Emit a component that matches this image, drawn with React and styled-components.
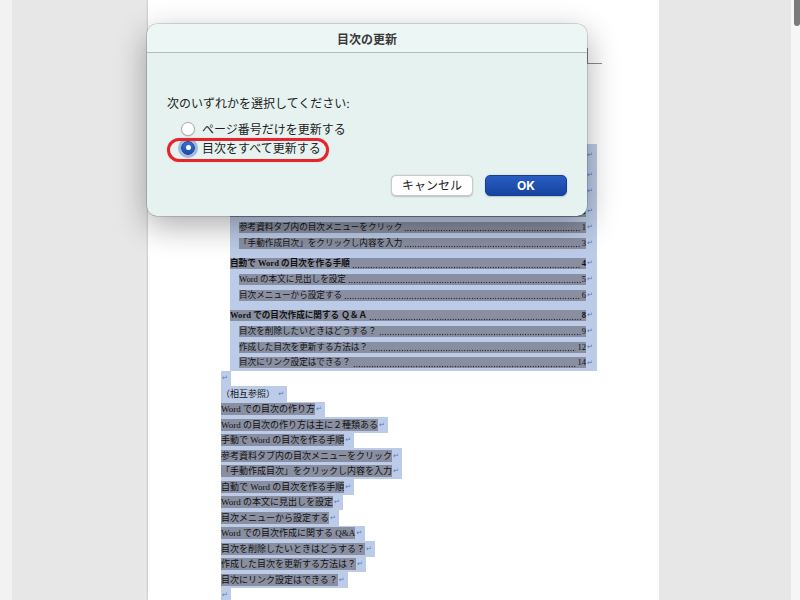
import React from 'react';
import styled, { createGlobalStyle } from 'styled-components';

const Global = createGlobalStyle`
  html, body { margin: 0; padding: 0; }
  body { width: 800px; height: 600px; overflow: hidden; background: #e7e7e7; }
`;

const LIGHT = '#bccbe7';
const DARK = '#898fa1';

const Screen = styled.div`
  position: relative;
  width: 800px;
  height: 600px;
  display: flex;
  overflow: hidden;
  background: #e7e7e7;
`;

const SideStrip = styled.div`
  flex: none;
  width: 12px;
  background: #f2f2f2;
`;

const Gutter = styled.div`
  flex: none;
  width: ${p => p.$w}px;
  background: #e7e7e7;
`;

const Page = styled.div`
  flex: none;
  width: 511px;
  box-sizing: border-box;
  background: #ffffff;
  box-shadow: 0 0 2px rgba(0, 0, 0, 0.28);
  padding: 48px 0 0 73px;
  font-family: "Liberation Serif", "Noto Sans CJK JP", serif;
  color: #111;
`;

const CropMark = styled.div`
  margin-left: 366px;
  width: 15px;
  height: 16px;
  box-sizing: border-box;
  border-left: 1px solid #8c8c8c;
  border-bottom: 1px solid #8c8c8c;
`;

const TocBlock = styled.div`
  margin-top: 80px;
  margin-left: 9px;
  width: 367px;
  padding-top: 3px;
  background: ${LIGHT};
`;

const TocRow = styled.div`
  display: flex;
  align-items: center;
  height: 15.8px;
  margin-top: ${p => (p.$heading ? 4.6 : 0)}px;
  padding-left: ${p => (p.$sub ? 9 : 0)}px;
`;

const TocBand = styled.div`
  flex: 1;
  min-width: 0;
  display: flex;
  align-items: center;
  height: 11px;
  background: ${DARK};
  white-space: nowrap;
  font-size: 8.6px;
  line-height: 11px;
  font-weight: ${p => (p.$bold ? 700 : 400)};
`;

const TocLabel = styled.span`
  flex: none;
`;

const Leader = styled.span`
  flex: 1;
  min-width: 0;
  height: 11px;
  margin: 0 1px 0 2px;
  background-image: radial-gradient(circle, #222 0.55px, transparent 0.9px);
  background-size: 2.6px 2.6px;
  background-repeat: repeat-x;
  background-position: 0 7.6px;
`;

const PageNum = styled.span`
  flex: none;
`;

const ReturnMark = styled.span`
  flex: none;
  width: ${p => (p.$w ? p.$w + 'px' : 'auto')};
  padding-left: 1px;
  font-family: "DejaVu Sans", sans-serif;
  font-size: 7px;
  line-height: 10px;
  color: #5179c6;
`;

const ListBlock = styled.div`
  display: flex;
  flex-direction: column;
  align-items: flex-start;
`;

const ListLine = styled.div`
  display: flex;
  align-items: center;
  height: 15.5px;
  background: ${LIGHT};
  padding-right: 3px;
  font-size: 9px;
`;

const ListText = styled.span`
  display: flex;
  align-items: center;
  height: 12px;
  line-height: 12px;
  white-space: nowrap;
  background: ${p => (p.$plain ? 'transparent' : DARK)};
`;

const ScrollTrack = styled.div`
  flex: none;
  width: 9px;
  background: #f6f6f6;
`;

const ScrollThumb = styled.div`
  margin-left: 3px;
  width: 6px;
  height: 26px;
  background: #7b7b7b;
  border-radius: 0 0 3px 3px;
`;

/* Dialog */
const Dialog = styled.div`
  position: absolute;
  left: 147px;
  top: 24px;
  width: 440px;
  height: 192px;
  border-radius: 10px;
  background: #e6f2ef;
  box-shadow: 0 0 0 0.5px rgba(0, 0, 0, 0.28), 0 10px 32px rgba(0, 0, 0, 0.33);
  overflow: hidden;
  display: flex;
  flex-direction: column;
  font-family: "Inter", "Noto Sans CJK JP", sans-serif;
  color: #222;
`;

const TitleBar = styled.div`
  flex: none;
  height: 29px;
  box-sizing: border-box;
  display: flex;
  align-items: center;
  justify-content: center;
  background: #ecf6f4;
  border-bottom: 1px solid #b3bebc;
  font-size: 12px;
  font-weight: 700;
  color: #3a3a3a;
`;

const DialogBody = styled.div`
  flex: 1;
  display: flex;
  flex-direction: column;
  padding: 43px 20px 0 20px;
`;

const Prompt = styled.div`
  font-size: 12px;
  line-height: 16px;
`;

const Options = styled.div`
  margin-top: 7px;
  display: flex;
  flex-direction: column;
`;

const Option = styled.div`
  position: relative;
  display: flex;
  align-items: center;
  gap: 7px;
  height: 19px;
  padding-left: 14px;
  font-size: 12px;
`;

const Radio = styled.span`
  flex: none;
  width: 14px;
  height: 14px;
  box-sizing: border-box;
  border-radius: 50%;
  display: flex;
  align-items: center;
  justify-content: center;
  background: ${p => (p.$on ? 'linear-gradient(#3b6fd6, #1c4cae)' : '#ffffff')};
  border: ${p => (p.$on ? '0.5px solid #173f93' : '0.5px solid #adadad')};
  box-shadow: ${p =>
    p.$on ? '0 0 0 3px rgba(70, 115, 200, 0.45)' : '0 0.5px 1px rgba(0,0,0,0.18)'};
`;

const RadioDot = styled.span`
  width: 5px;
  height: 5px;
  border-radius: 50%;
  background: #ffffff;
`;

const Annotation = styled.span`
  position: absolute;
  left: 0;
  top: 0;
  width: 162px;
  height: 24px;
  box-sizing: border-box;
  border: 3px solid #e6242b;
  border-radius: 12px;
  box-shadow: 0 0 1px rgba(230, 36, 43, 0.6);
  pointer-events: none;
`;

const ButtonRow = styled.div`
  margin-top: 18px;
  display: flex;
  justify-content: flex-end;
  gap: 12px;
`;

const Button = styled.button`
  width: 82px;
  height: 21px;
  padding: 0;
  border-radius: 5px;
  font-family: inherit;
  font-size: 12px;
  line-height: 20px;
  cursor: default;
  color: ${p => (p.$primary ? '#ffffff' : '#222222')};
  font-weight: ${p => (p.$primary ? 700 : 400)};
  background: ${p => (p.$primary ? 'linear-gradient(#2a5cc2, #16449f)' : '#ffffff')};
  border: ${p => (p.$primary ? '0.5px solid #143f95' : '0.5px solid #c9c9c9')};
  box-shadow: 0 0.5px 1.5px rgba(0, 0, 0, 0.2);
`;

const toc = [
  { t: '目次', p: '', kind: 'title' },
  { t: 'Word での目次の作り方', p: '1', kind: 'h' },
  { t: 'Word の目次の作り方は主に２種類ある', p: '1', kind: 's' },
  { t: '手動で Word の目次を作る手順', p: '1', kind: 'h' },
  { t: '参考資料タブ内の目次メニューをクリック', p: '1', kind: 's' },
  { t: '「手動作成目次」をクリックし内容を入力', p: '3', kind: 's' },
  { t: '自動で Word の目次を作る手順', p: '4', kind: 'h' },
  { t: 'Word の本文に見出しを設定', p: '5', kind: 's' },
  { t: '目次メニューから設定する', p: '6', kind: 's' },
  { t: 'Word での目次作成に関する Ｑ＆Ａ', p: '8', kind: 'h' },
  { t: '目次を削除したいときはどうする？', p: '9', kind: 's' },
  { t: '作成した目次を更新する方法は？', p: '12', kind: 's' },
  { t: '目次にリンク設定はできる？', p: '14', kind: 's' },
];

const list = [
  'Word での目次の作り方',
  'Word の目次の作り方は主に２種類ある',
  '手動で Word の目次を作る手順',
  '参考資料タブ内の目次メニューをクリック',
  '「手動作成目次」をクリックし内容を入力',
  '自動で Word の目次を作る手順',
  'Word の本文に見出しを設定',
  '目次メニューから設定する',
  'Word での目次作成に関する Q&A',
  '目次を削除したいときはどうする？',
  '作成した目次を更新する方法は？',
  '目次にリンク設定はできる？',
];

export default function App() {
  return (
    <>
      <Global />
      <Screen>
        <SideStrip />
        <Gutter $w={136} />
        <Page>
          <CropMark />
          <TocBlock>
            {toc.map((r, i) => (
              <TocRow key={i} $heading={r.kind === 'h' && i > 0} $sub={r.kind === 's'}>
                <TocBand $bold={r.kind !== 's'}>
                  <TocLabel>{r.t}</TocLabel>
                  {r.p && <Leader />}
                  {r.p && <PageNum>{r.p}</PageNum>}
                </TocBand>
                <ReturnMark $w={10}>↵</ReturnMark>
              </TocRow>
            ))}
          </TocBlock>
          <ListBlock>
            <ListLine>
              <ReturnMark>↵</ReturnMark>
            </ListLine>
            <ListLine>
              <ListText $plain>（相互参照）&nbsp;</ListText>
              <ReturnMark>↵</ReturnMark>
            </ListLine>
            {list.map((t, i) => (
              <ListLine key={i}>
                <ListText>{t}</ListText>
                <ReturnMark>↵</ReturnMark>
              </ListLine>
            ))}
            <ListLine>
              <ReturnMark>↵</ReturnMark>
            </ListLine>
          </ListBlock>
        </Page>
        <Gutter $w={132} />
        <ScrollTrack>
          <ScrollThumb />
        </ScrollTrack>

        <Dialog>
          <TitleBar>目次の更新</TitleBar>
          <DialogBody>
            <Prompt>次のいずれかを選択してください:</Prompt>
            <Options>
              <Option>
                <Radio />
                <span>ページ番号だけを更新する</span>
              </Option>
              <Option>
                <Annotation />
                <Radio $on>
                  <RadioDot />
                </Radio>
                <span>目次をすべて更新する</span>
              </Option>
            </Options>
            <ButtonRow>
              <Button>キャンセル</Button>
              <Button $primary>OK</Button>
            </ButtonRow>
          </DialogBody>
        </Dialog>
      </Screen>
    </>
  );
}
